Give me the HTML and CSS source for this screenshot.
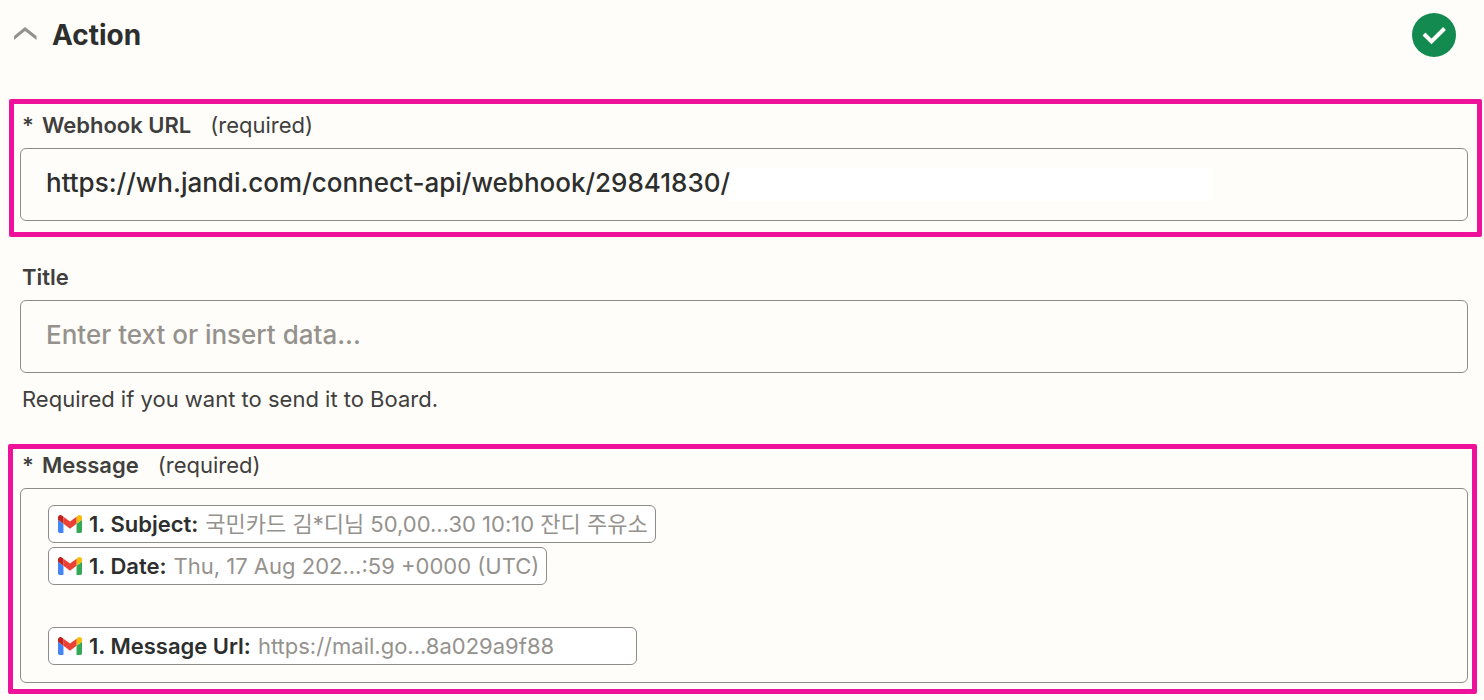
FILE: index.html
```html
<!DOCTYPE html>
<html lang="en">

<head>
    <meta charset="UTF-8">
    <meta name="viewport" content="width=device-width, initial-scale=1">
    <title>Action</title>
    <link rel="stylesheet" href="styles.css">
</head>
<body>
    <svg class="sprite" aria-hidden="true">
        <symbol id="gmail" viewBox="52 42 88 66">
            <path fill="#4285f4" d="M58 108h14V74L52 59v43c0 3.320 2.690 6 6 6"/>
            <path fill="#34a853" d="M120 108h14c3.320 0 6-2.690 6-6V59l-20 15"/>
            <path fill="#fbbc04" d="M120 48v26l20-15v-8c0-7.420-8.470-11.650-14.400-7.200"/>
            <path fill="#ea4335" d="M72 74V48l24 18 24-18v26L96 92"/>
            <path fill="#c5221f" d="M52 51v8l20 15V48l-5.600-4.200c-5.940-4.450-14.400-.220-14.400 7.200"/>
        </symbol>
    </svg>

    <header class="header">
        <button class="toggle" type="button" aria-expanded="true">
            <svg class="chevron" viewBox="0 0 24 16" aria-hidden="true">
                <path d="M1 9L12 0l11.500 9v4L12 4 1 13z" fill="#95928e"/>
            </svg>
            <span>Action</span>
        </button>
        <svg class="status" viewBox="0 0 44 44" role="img" aria-label="Complete">
            <circle cx="22" cy="22" r="22" fill="#138a50"/>
            <path d="M12 21l7.500 7.500L32.500 15.500" fill="none" stroke="#fffdf9" stroke-width="4"/>
        </svg>
    </header>

    <form class="form">
        <div class="highlight webhook">
            <label class="label" for="webhook"><span class="star">*</span>Webhook URL<span class="required">(required)</span></label>
            <input class="input masked" type="text" id="webhook" value="https://wh.jandi.com/connect-api/webhook/29841830/">
        </div>

        <div class="field">
            <label class="label" for="title">Title</label>
            <input class="input" type="text" id="title" placeholder="Enter text or insert data...">
            <p class="help">Required if you want to send it to Board.</p>
        </div>

        <div class="highlight message">
            <div class="label" id="message_label"><span class="star">*</span>Message<span class="required">(required)</span></div>
            <div class="editor" role="textbox" aria-multiline="true" aria-labelledby="message_label" contenteditable="true" spellcheck="false">
                <div class="line"><span class="chip" contenteditable="false"><svg class="gmail"><use href="#gmail"/></svg><b>1. Subject:</b><span class="value">국민카드 김*디님 50,00...30 10:10 잔디 주유소</span></span></div>
                <div class="line"><span class="chip" contenteditable="false"><svg class="gmail"><use href="#gmail"/></svg><b>1. Date:</b><span class="value">Thu, 17 Aug 202...:59 +0000 (UTC)</span></span></div>
                <div class="line blank"></div>
                <div class="line"><span class="chip url" contenteditable="false"><svg class="gmail"><use href="#gmail"/></svg><b>1. Message Url:</b><span class="value">https://mail.go...8a029a9f88</span></span></div>
            </div>
        </div>
    </form>
</body>
</html>
```

FILE: styles.css
```css
*{
    box-sizing: border-box;
}

body{
    margin: 0;
    background-color: #fffdf9;
    color: #403f3e;
    font-family: Inter, "Noto Sans CJK KR", sans-serif;
    font-size: 22px;
    line-height: 28px;
}

.sprite{
    display: none;
}

.header{
    display: flex;
    align-items: center;
    justify-content: space-between;
    height: 70px;
    padding: 0 28px 0 13px;
}

.toggle{
    display: flex;
    align-items: center;
    gap: 15px;
    padding: 0;
    border: none;
    background: none;
    color: #2d2e2e;
    font: 700 28px/36px Inter, sans-serif;
    cursor: pointer;
}

.chevron{
    width: 24px;
    height: 16px;
}

.status{
    width: 44px;
    height: 44px;
}

.form{
    padding-top: 29px;
}

.highlight{
    border: 5px solid #ee1199;
    border-radius: 2px;
}

.webhook{
    margin: 0 2px 0 9px;
    padding: 7px 9px 11px 6px;
}

.field{
    padding: 26px 16px 31px 20px;
}

.message{
    margin: 0 7px 0 8px;
    padding: 2px 4px 6px 7px;
}

.label{
    display: block;
    margin: 0 0 9px 2px;
    font-weight: 600;
}

.star{
    margin-right: 8px;
}

.required{
    margin-left: 19px;
    font-weight: 400;
}

.input{
    display: block;
    width: 100%;
    height: 73px;
    padding: 0 24px 4px 25px;
    border: 1px solid #8f8d89;
    border-radius: 6px;
    background-color: #fffdf9;
    color: #2d2e2e;
    font: 500 26px/36px Inter, sans-serif;
}

.input::placeholder{
    color: #95928e;
    opacity: 1;
}

/* blank patch over the private part of the address */
.masked{
    background-image: linear-gradient(#fff, #fff);
    background-position: 702px 19px;
    background-size: 490px 33px;
    background-repeat: no-repeat;
}

.help{
    margin: 12px 0 0 2px;
}

.editor{
    display: grid;
    gap: 4px;
    padding: 16px 26px 17px 27px;
    border: 1px solid #8f8d89;
    border-radius: 6px;
}

.line{
    display: flex;
    height: 38px;
}

.blank{
    height: 34px;
}

.chip{
    display: flex;
    align-items: center;
    padding: 0 7px 0 9px;
    border: 1px solid #8f8d89;
    border-radius: 6px;
    background-color: #fff;
    white-space: nowrap;
}

.chip b{
    margin: 0 7px;
    color: #2d2e2e;
    font-weight: 600;
}

.chip .value{
    color: #95928e;
}

.url{
    padding-right: 82px;
}

.gmail{
    width: 24px;
    height: 18px;
}
```
